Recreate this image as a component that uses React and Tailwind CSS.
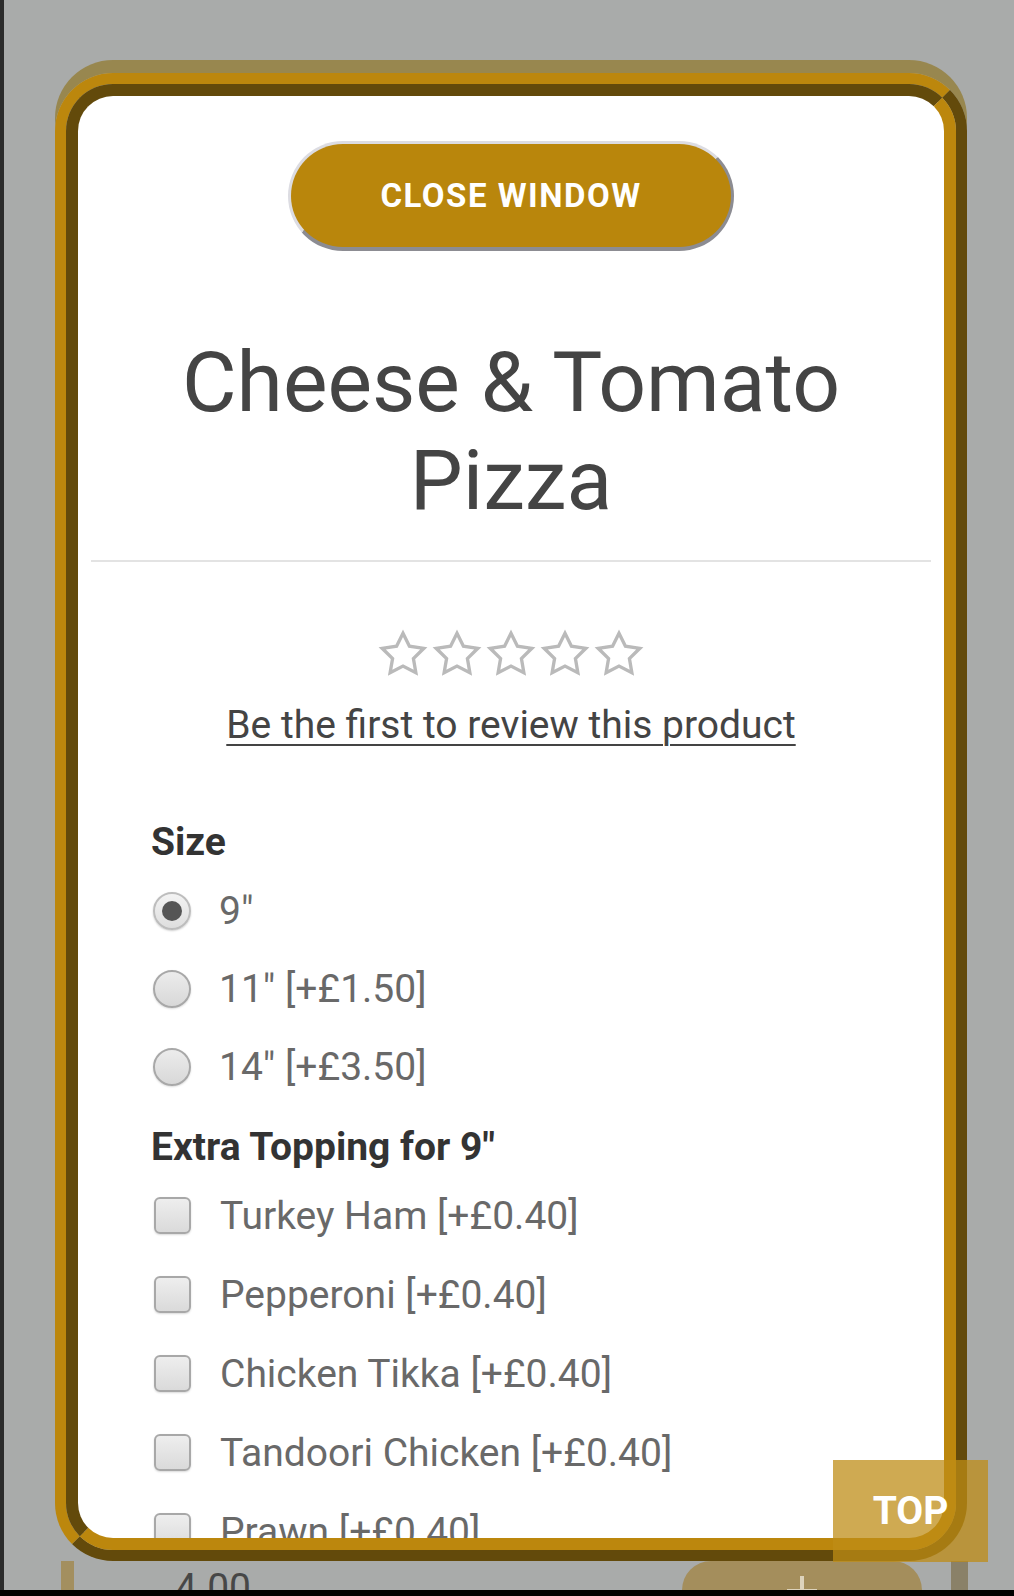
import React from 'react';

const sizes = [
  { label: '9"', checked: true },
  { label: '11" [+£1.50]', checked: false },
  { label: '14" [+£3.50]', checked: false },
];

const toppings = [
  'Turkey Ham [+£0.40]',
  'Pepperoni [+£0.40]',
  'Chicken Tikka [+£0.40]',
  'Tandoori Chicken [+£0.40]',
  'Prawn [+£0.40]',
];

function Star() {
  return (
    <svg width="50" height="50" viewBox="0 0 24 24" fill="none" className="blur-[0.5px]">
      <path
        d="M12 2l3.09 6.26L22 9.27l-5 4.87 1.18 6.88L12 17.77l-6.18 3.25L7 14.14 2 9.27l6.91-1.01L12 2z"
        stroke="#bababa"
        strokeWidth="1.6"
        strokeLinejoin="miter"
      />
    </svg>
  );
}

function Radio({ checked }) {
  return (
    <span
      className={
        checked
          ? 'ml-[2px] w-[38px] h-[38px] rounded-full border-2 border-[#bdbdbd] bg-linear-to-b from-[#f3f3f3] to-[#dedede] flex items-center justify-center shadow-[0_1px_2px_rgba(0,0,0,0.2)] shrink-0'
          : 'ml-[2px] w-[38px] h-[38px] rounded-full border-2 border-[#a8a8a8] bg-linear-to-b from-[#ececec] to-[#d8d8d8] shadow-[0_1px_2px_rgba(0,0,0,0.15)] shrink-0'
      }
    >
      {checked && <span className="w-[20px] h-[20px] rounded-full bg-[#555]" />}
    </span>
  );
}

function Checkbox() {
  return (
    <span className="ml-[3px] w-[37px] h-[37px] rounded-[6px] border-2 border-[#a8a8a8] bg-linear-to-b from-[#eeeeee] to-[#dadada] shadow-[0_1px_2px_rgba(0,0,0,0.15)] shrink-0" />
  );
}

export default function App() {
  return (
    <div className="relative w-[1014px] h-[1596px] overflow-hidden bg-[#a9abaa] font-['Roboto',sans-serif] flex flex-col">
      <div className="flex h-[1590px]">
        <div className="w-[4px] bg-[#2b2b2b] shrink-0" />
        <div className="flex flex-col pt-[73px] pl-[51px]">
          {/* modal frame */}
          <div className="w-[912px] h-[1488px] rounded-[58px] border-[11px] border-t-[#bc870d] border-l-[#bc870d] border-b-[#634a0b] border-r-[#634a0b] shadow-[0_-13px_0_0_#98874f]">
            <div className="h-full rounded-[47px] border-[12px] border-t-[#634a0b] border-l-[#634a0b] border-b-[#bc870d] border-r-[#bc870d] bg-white overflow-hidden">
              <div className="pt-[45px] flex flex-col">
                <button className="mx-auto w-[446px] h-[110px] rounded-full bg-[#b9860c] border-[3px] border-b-[4px] border-t-[#dcdce2] border-l-[#dcdce2] border-r-[#8c8c92] border-b-[#8c8c92] text-white font-bold text-[33px] tracking-[1.5px]">
                  CLOSE WINDOW
                </button>

                <h1 className="mt-[83px] text-center text-[84px] leading-[98px] font-normal text-[#444]">
                  Cheese &amp; Tomato
                  <br />
                  Pizza
                </h1>

                <div className="mt-[30px] mx-[13px] h-[2px] bg-[#e3e3e3]" />

                <div className="mt-[67px] flex justify-center gap-[4px]">
                  <Star />
                  <Star />
                  <Star />
                  <Star />
                  <Star />
                </div>

                <p className="mt-[23px] text-center text-[39px] leading-[46px] text-[#444] underline decoration-2 underline-offset-[6px]">
                  Be the first to review this product
                </p>

                <div className="mt-[71px] pl-[73px]">
                  <div className="text-[39px] leading-[46px] font-bold text-[#333] mb-[7px]">Size</div>
                  {sizes.map((s) => (
                    <div key={s.label} className="h-[78px] flex items-center">
                      <Radio checked={s.checked} />
                      <span className="ml-[28px] text-[39px] leading-[46px] text-[#696969]">{s.label}</span>
                    </div>
                  ))}

                  <div className="mt-[18px] text-[39px] leading-[46px] font-bold text-[#333] mb-[6px]">
                    Extra Topping for 9"
                  </div>
                  {toppings.map((t) => (
                    <div key={t} className="h-[79px] flex items-center">
                      <Checkbox />
                      <span className="ml-[29px] text-[39px] leading-[46px] text-[#696969]">{t}</span>
                    </div>
                  ))}
                </div>
              </div>
            </div>
          </div>

          {/* page content peeking under the modal */}
          <div className="w-[959px] h-[29px] flex overflow-hidden">
            <div className="ml-[6px] w-[13px] bg-[#a38f5f]" />
            <div className="ml-[101px] mt-[4px] text-[39px] leading-[46px] text-[#474747]">4.00</div>
            <div className="ml-auto w-[240px] rounded-t-[30px] bg-[#a48e5c] flex justify-center">
              <svg width="34" height="34" viewBox="0 0 34 34" className="mt-[11px]">
                <path d="M17 4v30M2 19h30" stroke="#ddd3bc" strokeWidth="4" />
              </svg>
            </div>
            <div className="ml-[29px] w-[17px] bg-[#8a8168]" />
            <div className="w-[46px]" />
          </div>
        </div>
      </div>
      <div className="h-[6px] bg-black" />

      <div className="absolute left-[833px] top-[1460px] w-[155px] h-[102px] bg-[rgba(190,140,21,0.74)] flex items-center justify-center text-white font-bold text-[39px]">
        TOP
      </div>
    </div>
  );
}
